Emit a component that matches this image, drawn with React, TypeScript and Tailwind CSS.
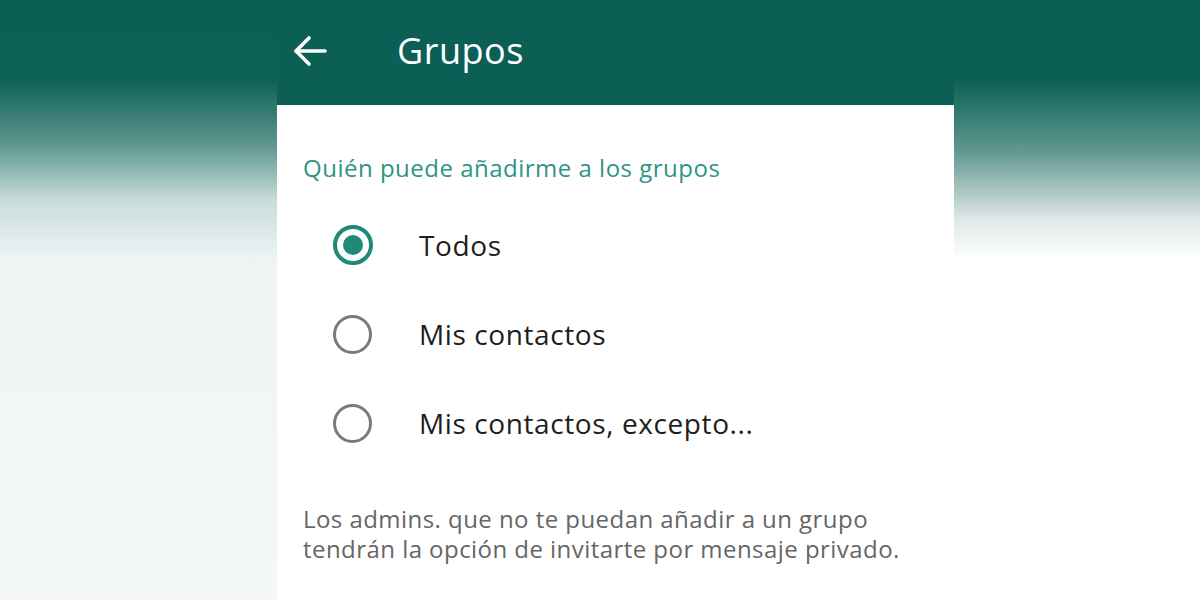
const options = [
  { label: "Todos", checked: true },
  { label: "Mis contactos", checked: false },
  { label: "Mis contactos, excepto...", checked: false },
];

function BackArrow() {
  return (
    <svg width="34" height="32" viewBox="0 0 34 32" fill="none" stroke="currentColor" strokeWidth="3.6" strokeLinecap="round" strokeLinejoin="round">
      <path d="M3 16H32" />
      <path d="M16 3L3 16L16 29" />
    </svg>
  );
}

function Radio({ checked }: { checked: boolean }) {
  return checked ? (
    <span className="flex h-[40px] w-[40px] items-center justify-center rounded-full border-[4px] border-[#1f8a78]">
      <span className="block h-[20px] w-[20px] rounded-full bg-[#1f8a78]" />
    </span>
  ) : (
    <span className="block h-[39px] w-[39px] rounded-full border-[3px] border-[#7a7a7a]" />
  );
}

export default function App() {
  return (
    <div
      className="flex h-[600px] w-[1200px] overflow-hidden bg-[linear-gradient(to_bottom,#0a5e54_0px,#0d6157_80px,#5f978f_145px,#c9dcda_200px,#eef4f4_260px,#f4f7f7_600px)]"
      style={{ fontFamily: "'Open Sans', 'Noto Sans', sans-serif" }}
    >
      <div className="w-[277px]" />

      {/* Phone screen */}
      <div className="flex w-[677px] flex-col bg-white">
        <header className="flex h-[105px] items-center bg-[#0b5f55] pb-[4px] text-white">
          <div className="flex w-[120px] pl-[16px]">
            <BackArrow />
          </div>
          <h1 className="text-[36px] font-normal tracking-[0.5px]">Grupos</h1>
        </header>

        <div className="flex flex-col px-[26px] pt-[48px]">
          <p className="text-[24px] leading-[30px] tracking-[0.5px] text-[#2e9484]">
            Quién puede añadirme a los grupos
          </p>

          <div className="mt-[42px] flex flex-col gap-[49px]">
            {options.map((o) => (
              <div key={o.label} className="flex h-[40px] items-center">
                <div className="w-[116px] pl-[30px]">
                  <Radio checked={o.checked} />
                </div>
                <span className="text-[28px] tracking-[0.6px] text-[#1e1e1e]">{o.label}</span>
              </div>
            ))}
          </div>

          <p className="mt-[61px] text-[24px] leading-[30px] tracking-[0.45px] text-[#666666]">
            Los admins. que no te puedan añadir a un grupo
            <br />
            tendrán la opción de invitarte por mensaje privado.
          </p>
        </div>
      </div>

      <div className="flex-1 bg-[linear-gradient(to_bottom,#0a5e54_0px,#0b6056_80px,#5f978f_150px,#dfe9e8_220px,#ffffff_260px)]" />
    </div>
  );
}
